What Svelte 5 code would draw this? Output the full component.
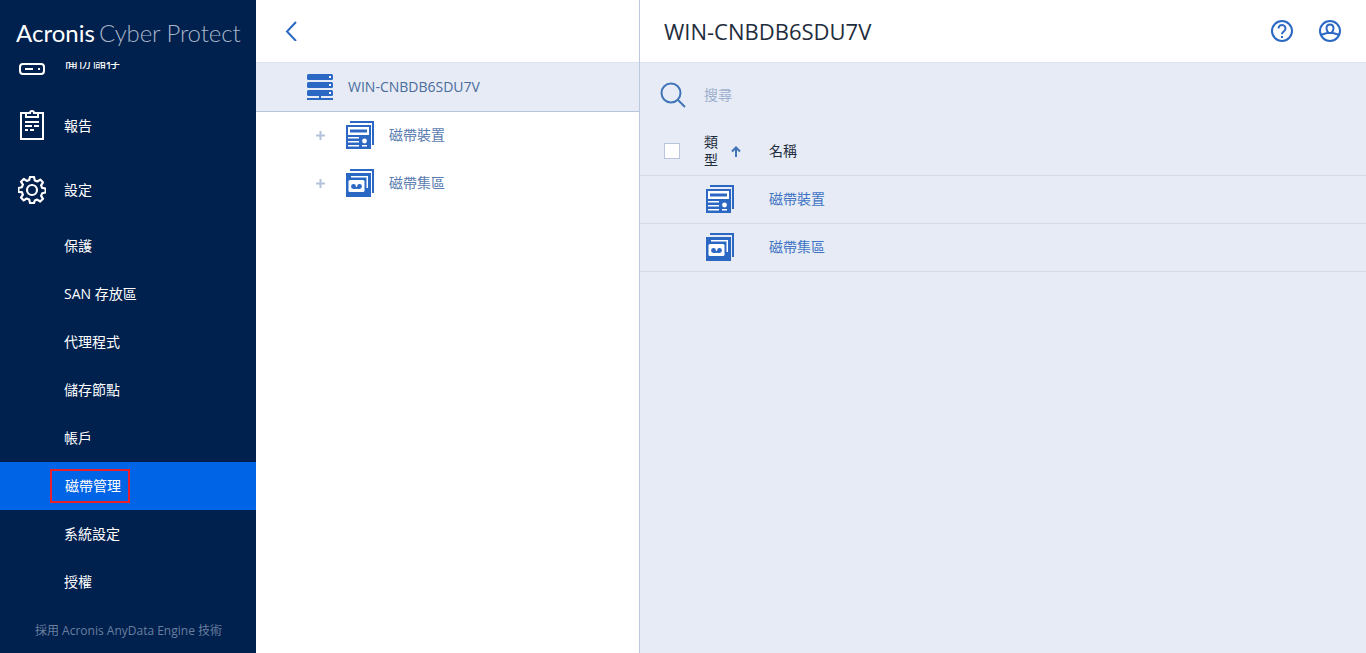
<script>
  const subs = ['保護', 'SAN 存放區', '代理程式', '儲存節點', '帳戶', '磁帶管理', '系統設定', '授權'];
  const nodes = [
    { label: '磁帶裝置', kind: 'device' },
    { label: '磁帶集區', kind: 'pool' }
  ];
</script>

{#snippet deviceIcon()}
  <svg class="node" viewBox="0 0 28 28" width="28" height="28">
    <path class="blue" d="M4 0h24v24h-2V2H4z" />
    <path class="blue" d="M0 4h25v24H0z" />
    <path class="white" d="M2 6h21v8H2z" />
    <path class="blue" d="M4 8.500h17v3H4z" />
    <path class="white" d="M2 16h11v1.500H2z M2 20h11v1.500H2z M2 24h11v1.500H2z M16 24h5v1.500h-5z" />
    <circle class="white" cx="18.500" cy="20" r="2.400" />
  </svg>
{/snippet}

{#snippet poolIcon()}
  <svg class="node" viewBox="0 0 28 28" width="28" height="28">
    <path class="blue" d="M4 0h24v24h-2V2H4z" />
    <path class="blue" d="M0 4h25v24H0z" />
    <path class="white" d="M5 7h17v12h-1.500V8.500H5z" />
    <rect class="white" x="2.500" y="11" width="16" height="12" rx="1.500" />
    <circle class="blue" cx="7.500" cy="17.500" r="2.400" />
    <circle class="blue" cx="13.500" cy="17.500" r="2.400" />
    <path class="blue" d="M7.500 18h6v1.900h-6z" />
  </svg>
{/snippet}

<div class="page">
  <aside class="sidebar">
    <div class="logo"><span class="brand">Acronis</span> <span class="product">Cyber Protect</span></div>
    <nav class="nav">
      <div class="scroller">
        <div class="main-item">
          <svg class="main-icon" viewBox="0 0 28 28" width="28" height="28" fill="none" stroke="#fff" stroke-width="2">
            <rect x="2" y="16" width="24" height="10" rx="3" />
            <path d="M7 21h8 M20 21h2" />
          </svg>
          <span>備份儲存</span>
        </div>
        <div class="main-item">
          <svg class="main-icon clip" viewBox="0 0 28 32" width="28" height="32" fill="none" stroke="#fff" stroke-width="2">
            <path d="M9 5H3v26h22V5h-6" />
            <path d="M8 9V5h4a2 2 0 0 1 4 0h4v4z" />
            <path d="M7 14h14 M7 18h7 M16 18h5 M7 22h3 M12 22h4" stroke-width="1.800" />
          </svg>
          <span>報告</span>
        </div>
        <div class="main-item">
          <svg class="main-icon" viewBox="0 0 28 28" width="28" height="28" fill="none" stroke="#fff" stroke-width="2.200" stroke-linejoin="round">
            <circle cx="14" cy="14" r="5" />
            <path d="M12 1h4l.8 3.500 2.500 1 3-1.900 2.700 2.800-1.900 3 1 2.400 3.500.7v4l-3.500.8-1 2.500 1.900 3-2.800 2.700-3-1.900-2.400 1L16 27h-4l-.8-3.500-2.500-1-3 1.900-2.700-2.800 1.900-3-1-2.400L.4 16v-4l3.500-.8 1-2.500-1.900-3 2.800-2.700 3 1.900 2.400-1z" />
          </svg>
          <span>設定</span>
        </div>
        {#each subs as s}
          <div class="sub-item" class:active={s === '磁帶管理'}>
            <span class:marked={s === '磁帶管理'}>{s}</span>
          </div>
        {/each}
      </div>
    </nav>
    <div class="powered">採用 Acronis AnyData Engine 技術</div>
  </aside>

  <section class="tree">
    <div class="tree-top">
      <svg viewBox="0 0 12 20" width="12" height="20" fill="none" stroke="#2a68c4" stroke-width="2"><path d="M11 1 2 10.500 11 20" /></svg>
    </div>
    <div class="root-row">
      <svg viewBox="0 0 26 26" width="26" height="26">
        <rect class="blue" x="0" y="0" width="26" height="6" rx="1.500" />
        <rect class="blue" x="0" y="8" width="26" height="6" rx="1.500" />
        <rect class="blue" x="0" y="16" width="26" height="6" rx="1.500" />
        <rect class="white" x="22" y="2" width="2" height="2" />
        <rect class="white" x="22" y="10" width="2" height="2" />
        <rect class="white" x="22" y="18" width="2" height="2" />
        <path class="blue" d="M12 22h2v2h12v2H0v-2h12z" />
      </svg>
      <span>WIN-CNBDB6SDU7V</span>
    </div>
    {#each nodes as n}
      <div class="tree-row">
        <svg class="plus" viewBox="0 0 9 9" width="9" height="9"><path d="M3.500 0h2v3.500H9v2H5.500V9h-2V5.500H0v-2h3.500z" /></svg>
        {#if n.kind === 'device'}{@render deviceIcon()}{:else}{@render poolIcon()}{/if}
        <span>{n.label}</span>
      </div>
    {/each}
  </section>

  <main class="content">
    <header class="head">
      <h1>WIN-CNBDB6SDU7V</h1>
      <div class="head-icons">
        <svg viewBox="0 0 24 24" width="24" height="24" fill="none" stroke="#2a68c4" stroke-width="2">
          <circle cx="12" cy="12" r="10" />
          <path d="M8.500 9.500a3.500 3.500 0 1 1 5.500 2.800c-1.300.9-2 1.500-2 3" />
          <path d="M12 17v2" />
        </svg>
        <svg viewBox="0 0 24 24" width="24" height="24" fill="none" stroke="#2a68c4" stroke-width="2">
          <circle cx="12" cy="12" r="10" />
          <path d="M12 5.500c-2.200 0-3.500 1.600-3.500 3.700 0 2 1 3.800 2 4.800h3c1-1 2-2.800 2-4.800 0-2.100-1.300-3.700-3.500-3.700z" />
          <path d="M3 15.500c3 0 5-1.500 6.500-1.500h5c1.500 0 3.500 1.500 6.500 1.500" />
        </svg>
      </div>
    </header>
    <div class="search">
      <svg viewBox="0 0 26 26" width="26" height="26" fill="none" stroke="#3f74b8" stroke-width="2">
        <circle cx="11" cy="11" r="9.500" />
        <path d="m18 18 7 7" />
      </svg>
      <span>搜尋</span>
    </div>
    <div class="row th">
      <span class="check"></span>
      <span class="type-h">類型</span>
      <svg class="arrow" viewBox="0 0 10 11" width="10" height="11" fill="none" stroke="#3f74b8" stroke-width="2"><path d="M5 11V1.500 M1 5.500l4-4 4 4" /></svg>
      <span class="name-h">名稱</span>
    </div>
    {#each nodes as n}
      <div class="row td">
        <span class="icon-cell">{#if n.kind === 'device'}{@render deviceIcon()}{:else}{@render poolIcon()}{/if}</span>
        <span class="link">{n.label}</span>
      </div>
    {/each}
  </main>
</div>

<style>
  :global(body) {
    margin: 0;
    font-family: "Open Sans", "Noto Sans CJK TC", sans-serif;
    font-size: 14px;
    line-height: 18px;
    overflow: hidden;
  }
  .page {
    display: flex;
    width: 1366px;
    height: 653px;
    overflow: hidden;
    background: #e6ebf5;
  }
  .blue { fill: #2a68c4; }
  .white { fill: #fff; }
  .sidebar {
    width: 256px;
    flex: none;
    display: flex;
    flex-direction: column;
    background: #00204e;
    color: #fff;
  }
  .logo {
    height: 62px;
    flex: none;
    box-sizing: border-box;
    padding: 16px 0 0 16px;
    font-family: Lato, sans-serif;
    font-size: 24px;
    line-height: 34px;
    white-space: nowrap;
  }
  .brand { font-weight: 400; }
  .product { font-weight: 300; color: #a9b5c6; letter-spacing: -0.1px; margin-left: -2px; }
  .nav {
    flex: 1;
    overflow: hidden;
    min-height: 0;
  }
  .scroller { margin-top: -32px; }
  .main-item {
    height: 64px;
    display: flex;
    align-items: center;
    position: relative;
    padding-left: 64px;
  }
  .main-icon {
    position: absolute;
    left: 18px;
    top: 18px;
  }
  .main-icon.clip { top: 14px; }
  .sub-item {
    height: 48px;
    display: flex;
    align-items: center;
    padding-left: 64px;
  }
  .sub-item.active { background: #0064e6; }
  .marked {
    outline: 2px solid #e8202e;
    padding: 6px 7px 6px 13px;
    margin-left: -12px;
  }
  .powered {
    height: 47px;
    flex: none;
    box-sizing: border-box;
    padding-left: 35px;
    line-height: 50px;
    font-size: 12px;
    color: #6a7f9f;
    white-space: nowrap;
  }
  .tree {
    width: 383px;
    flex: none;
    background: #fff;
    border-right: 1px solid #bcc8dd;
    display: flex;
    flex-direction: column;
  }
  .tree-top {
    height: 63px;
    flex: none;
    box-sizing: border-box;
    padding: 21px 0 0 29px;
    border-bottom: 1px solid #dde4f1;
  }
  .tree-top svg { display: block; }
  .root-row {
    height: 49px;
    flex: none;
    box-sizing: border-box;
    display: flex;
    align-items: center;
    gap: 15px;
    padding-left: 51px;
    background: #e6ebf5;
    border-bottom: 1px solid #b8c5dc;
    color: #4b6b9c;
  }
  .tree-row {
    height: 48px;
    flex: none;
    box-sizing: border-box;
    padding: 0 0 2px 60px;
    display: flex;
    align-items: center;
    color: #5a7bb0;
  }
  .plus { fill: #b4c3dc; margin-right: 21px; }
  .node { display: block; }
  .tree-row .node { margin-right: 15px; }
  .content {
    flex: 1;
    display: flex;
    flex-direction: column;
    min-width: 0;
  }
  .head {
    height: 63px;
    flex: none;
    box-sizing: border-box;
    display: flex;
    align-items: center;
    justify-content: space-between;
    padding: 0 24px;
    background: #fff;
    border-bottom: 1px solid #dde4f1;
  }
  h1 {
    margin: 0;
    font-size: 22px;
    line-height: 30px;
    font-weight: 400;
    color: #1f2d3d;
  }
  .head-icons { display: flex; gap: 24px; }
  .head-icons svg { display: block; }
  .search {
    height: 65px;
    flex: none;
    box-sizing: border-box;
    padding: 0 0 2px 20px;
    display: flex;
    align-items: center;
    gap: 18px;
    color: #9eb0ce;
  }
  .row {
    display: flex;
    align-items: center;
    box-sizing: border-box;
    height: 48px;
    padding-bottom: 1px;
    border-bottom: 1px solid #d3dae8;
  }
  .th { color: #1f2d3d; }
  .check {
    width: 14px;
    height: 14px;
    margin-left: 24px;
    flex: none;
    background: #fff;
    border: 1px solid #b8c5dc;
  }
  .type-h {
    width: 15px;
    margin-left: 24px;
    flex: none;
  }
  .arrow { margin-left: 12px; flex: none; }
  .name-h { margin-left: 28px; }
  .icon-cell { margin-left: 66px; width: 63px; flex: none; }
  .link { color: #3f74c4; }
</style>
